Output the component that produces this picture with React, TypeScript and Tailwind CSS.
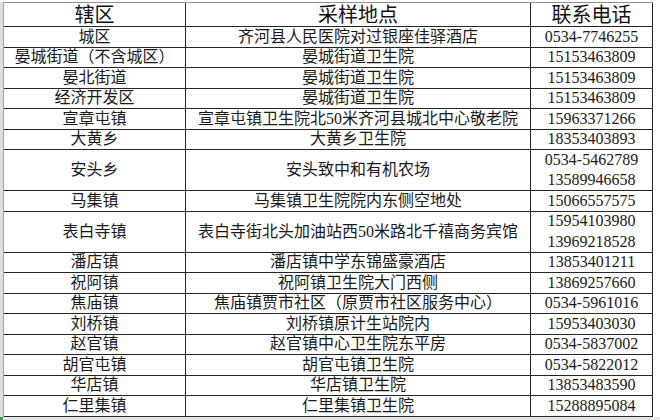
import React from 'react'

interface SiteRow {
    area: string
    place: string
    phones: string[]
}

const ROWS: SiteRow[] = [
    { area: '城区', place: '齐河县人民医院对过银座佳驿酒店', phones: ['0534-7746255'] },
    { area: '晏城街道（不含城区）', place: '晏城街道卫生院', phones: ['15153463809'] },
    { area: '晏北街道', place: '晏城街道卫生院', phones: ['15153463809'] },
    { area: '经济开发区', place: '晏城街道卫生院', phones: ['15153463809'] },
    { area: '宣章屯镇', place: '宣章屯镇卫生院北50米齐河县城北中心敬老院', phones: ['15963371266'] },
    { area: '大黄乡', place: '大黄乡卫生院', phones: ['18353403893'] },
    { area: '安头乡', place: '安头致中和有机农场', phones: ['0534-5462789', '13589946658'] },
    { area: '马集镇', place: '马集镇卫生院院内东侧空地处', phones: ['15066557575'] },
    { area: '表白寺镇', place: '表白寺街北头加油站西50米路北千禧商务宾馆', phones: ['15954103980', '13969218528'] },
    { area: '潘店镇', place: '潘店镇中学东锦盛豪酒店', phones: ['13853401211'] },
    { area: '祝阿镇', place: '祝阿镇卫生院大门西侧', phones: ['13869257660'] },
    { area: '焦庙镇', place: '焦庙镇贾市社区（原贾市社区服务中心）', phones: ['0534-5961016'] },
    { area: '刘桥镇', place: '刘桥镇原计生站院内', phones: ['15953403030'] },
    { area: '赵官镇', place: '赵官镇中心卫生院东平房', phones: ['0534-5837002'] },
    { area: '胡官屯镇', place: '胡官屯镇卫生院', phones: ['0534-5822012'] },
    { area: '华店镇', place: '华店镇卫生院', phones: ['13853483590'] },
    { area: '仁里集镇', place: '仁里集镇卫生院', phones: ['15288895084'] },
]

const FONT = "font-['Liberation_Serif','Noto_Sans_CJK_SC',serif]"

function Cell({ children, className = '' }: { children: React.ReactNode; className?: string }) {
    return (
        <div className={`flex flex-col items-center justify-center border-r border-b border-[#262626] leading-none whitespace-nowrap ${className}`}>
            {children}
        </div>
    )
}

export default function App() {
    return (
        <div className={`w-[660px] h-[420px] bg-white text-[#1a1a1a] ${FONT} flex flex-col overflow-hidden`}>
            <div className="flex flex-1 pt-[2px]">
                {/* narrow strip left of the sheet */}
                <div className="w-[3px] bg-[#dedede]" />
                <div className="flex flex-col">
                    <div className="w-[650px] border-t border-l border-[#8f8f8f] border-l-[#a3a3a3]">
                        {/* Header */}
                        <div className="grid grid-cols-[182px_345px_122px] h-[24px] text-[20px] text-[#111]">
                            <Cell>辖区</Cell>
                            <Cell>采样地点</Cell>
                            <Cell>联系电话</Cell>
                        </div>

                        {ROWS.map((row, i) => (
                            <div
                                key={i}
                                className={`grid grid-cols-[182px_345px_122px] text-[16px] ${
                                    row.phones.length > 1 ? 'h-[41px]' : 'h-[20.5px]'
                                }`}
                            >
                                <Cell>{row.area}</Cell>
                                <Cell>{row.place}</Cell>
                                <Cell className="gap-[4.5px]">
                                    {row.phones.map((p) => (
                                        <span key={p}>{p}</span>
                                    ))}
                                </Cell>
                            </div>
                        ))}
                    </div>
                </div>
            </div>
            {/* bottom strip of the sheet */}
            <div className="h-[3px] bg-[#e4e4e4] flex">
                <div className="w-[3px] bg-[#3c9a4c]" />
            </div>
        </div>
    )
}
